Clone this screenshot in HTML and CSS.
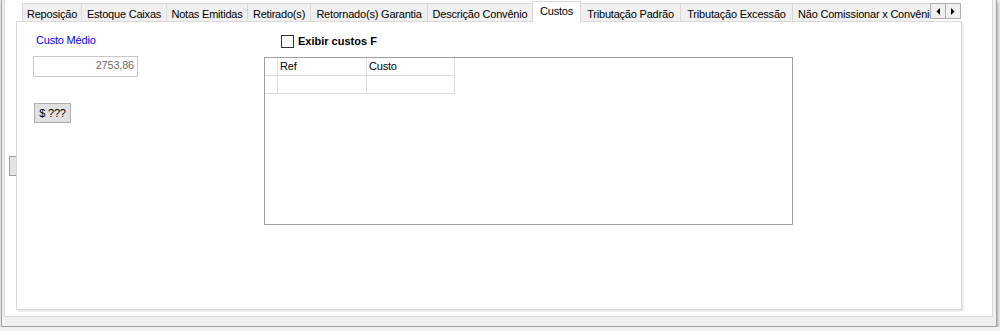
FILE: index.html
```html
<!DOCTYPE html>
<html lang="pt-BR">
<head>
    <meta charset="UTF-8">
    <title>Produto - Custos</title>
    <link rel="stylesheet" href="styles.css">
</head>
<body>
    <div class="window">
        <div class="panel">
            <!-- splitter grip on the left edge -->
            <div class="splitter"></div>

            <div class="tabctl">
                <div class="tabbar">
                    <div class="tabs">
                        <div class="tab">Reposição</div>
                        <div class="tab">Estoque Caixas</div>
                        <div class="tab">Notas Emitidas</div>
                        <div class="tab">Retirado(s)</div>
                        <div class="tab">Retornado(s) Garantia</div>
                        <div class="tab">Descrição Convênio</div>
                        <div class="tab active">Custos</div>
                        <div class="tab">Tributação Padrão</div>
                        <div class="tab">Tributação Excessão</div>
                        <div class="tab last">Não Comissionar x Convênio</div>
                    </div>
                    <div class="scroller">
                        <div class="scroll-btn">
                            <svg width="4" height="7" viewBox="0 0 4 7"><polygon points="4,0 4,7 0.5,3.5" fill="#000"/></svg>
                        </div>
                        <div class="scroll-btn">
                            <svg width="4" height="7" viewBox="0 0 4 7"><polygon points="0,0 0,7 3.5,3.5" fill="#000"/></svg>
                        </div>
                    </div>
                </div>

                <div class="page">
                    <div class="col-left">
                        <div class="caption">Custo Médio</div>
                        <div class="field">2753,86</div>
                        <div class="btn">$ ???</div>
                    </div>
                    <div class="col-right">
                        <div class="check">
                            <span class="box"></span>
                            <span class="check-text">Exibir custos F</span>
                        </div>
                        <div class="grid">
                            <div class="grid-row">
                                <div class="cell"></div>
                                <div class="cell">Ref</div>
                                <div class="cell">Custo</div>
                            </div>
                            <div class="grid-row">
                                <div class="cell"></div>
                                <div class="cell"></div>
                                <div class="cell"></div>
                            </div>
                        </div>
                    </div>
                </div>
            </div>
        </div>
    </div>
</body>
</html>
```

FILE: styles.css
```css
/* Windows-style form: tab control with the "Custos" page open */
:root { --tab-border: #d9d9d9; --face: #f0f0f0; --frame: #a0a0a0; }
body { margin: 0; background: var(--face); font-family: 'Liberation Sans', Arial, sans-serif; font-size: 11px; letter-spacing: -0.2px; color: #000; }

.window { margin-left: 1px; width: 996px; height: 327px; box-sizing: border-box; padding: 0 3px 9px 2px; border: 1px solid var(--frame); border-top: none; background: var(--face); box-shadow: 1px 2px 3px rgba(0,0,0,0.3); }
.panel { position: relative; height: 317px; box-sizing: border-box; border: 1px solid #d8d8d8; border-top: none; background: #fff; }
.splitter { position: absolute; left: 4px; top: 156px; width: 7px; height: 20px; box-sizing: border-box; border: 1px solid var(--frame); border-right: none; background: #e3e3e3; }

.tabctl { margin-left: 11px; width: 946px; }
.tabbar { display: flex; height: 21px; padding-left: 6px; }
.tabs { position: relative; z-index: 1; display: grid; grid-template-columns: 59px 85px 81px 63px 117px 105px 48px 100px 112px 138px; align-items: start; width: 908px; height: 22px; overflow: hidden; }
.tab { position: relative; margin-top: 3px; height: 18px; box-sizing: border-box; padding-top: 3px; line-height: 14px; border: 1px solid var(--tab-border); border-right: none; border-bottom: none; background: var(--face); text-align: center; white-space: nowrap; }
.tab.active { z-index: 2; margin-top: 1px; margin-right: -1px; height: 21px; padding-top: 2px; border-right: 1px solid var(--tab-border); background: #fff; }
.tab.last { text-align: left; padding-left: 5px; overflow: hidden; }
.scroller { display: flex; margin-top: 3px; }
.scroll-btn { display: flex; align-items: center; justify-content: center; width: 16px; height: 16px; box-sizing: border-box; border: 1px solid #adadad; background: var(--face); }
.scroll-btn + .scroll-btn { margin-left: -1px; }

.page { display: flex; height: 289px; box-sizing: border-box; border: 1px solid var(--tab-border); background: #fff; box-shadow: 1px 1px 0 #e8e8e8, 2px 2px 0 #f3f3f3; }

.col-left { width: 247px; box-sizing: border-box; padding: 12px 0 0 16px; }
.caption { padding-left: 3px; line-height: 13px; color: #0000ff; }
.field { margin-top: 9px; width: 105px; height: 21px; box-sizing: border-box; padding-right: 3px; border: 1px solid #c8c8c8; line-height: 17px; text-align: right; color: #6d6d6d; }
.btn { margin: 26px 0 0 1px; width: 37px; height: 20px; box-sizing: border-box; border: 1px solid #adadad; background: #e1e1e1; line-height: 18px; text-align: center; }

.col-right { padding-top: 13px; }
.check { display: flex; align-items: center; width: 116px; height: 13px; padding-left: 17px; box-sizing: border-box; overflow: hidden; white-space: nowrap; }
.box { flex: none; width: 13px; height: 13px; box-sizing: border-box; border: 1px solid #333; background: #fff; }
.check-text { margin-left: 4px; font-weight: bold; line-height: 13px; letter-spacing: 0; }

.grid { margin-top: 9px; width: 529px; height: 168px; box-sizing: border-box; border: 1px solid var(--frame); background: #fff; }
.grid-row { display: grid; grid-template-columns: 13px 89px 88px; height: 18px; }
.cell { box-sizing: border-box; padding-left: 2px; border-right: 1px solid #dcdcdc; border-bottom: 1px solid #dcdcdc; line-height: 17px; }
```
